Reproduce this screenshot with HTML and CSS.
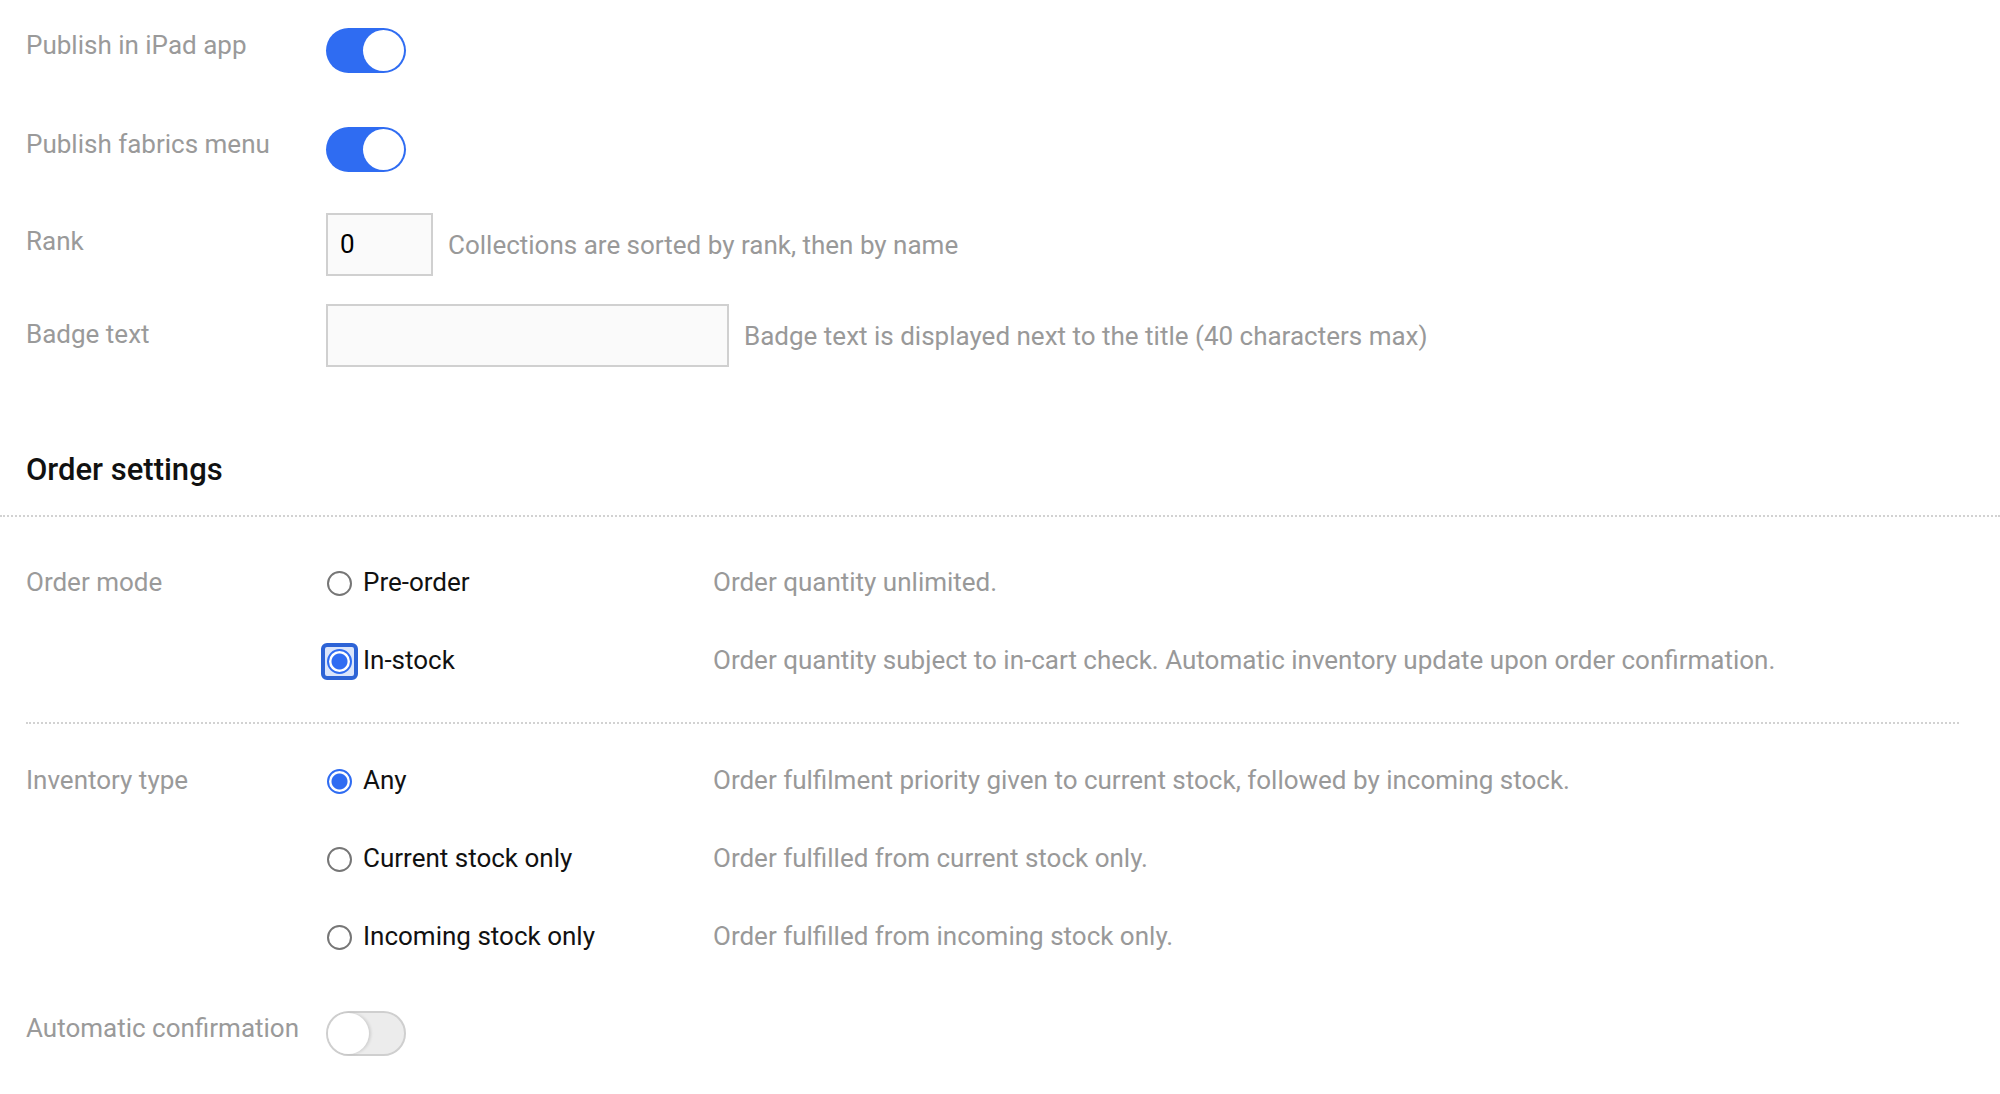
FILE: index.html
```html
<!DOCTYPE html>
<html lang="en">
<head>
<meta charset="utf-8">
<title>Collection settings</title>
<link rel="stylesheet" href="styles.css">
</head>
<body>
<div class="page">
  <section class="general">
    <div class="field field-toggle first">
      <div class="label">Publish in iPad app</div>
      <span class="toggle on"><span class="knob"></span></span>
    </div>
    <div class="field field-toggle second">
      <div class="label">Publish fabrics menu</div>
      <span class="toggle on"><span class="knob"></span></span>
    </div>
    <div class="field field-input rank">
      <div class="label">Rank</div>
      <div class="input input-rank">0</div>
      <div class="hint">Collections are sorted by rank, then by name</div>
    </div>
    <div class="field field-input badge">
      <div class="label">Badge text</div>
      <div class="input input-badge"></div>
      <div class="hint">Badge text is displayed next to the title (40 characters max)</div>
    </div>
  </section>

  <h2 class="section-title">Order settings</h2>
  <hr class="rule rule-full">

  <section class="order">
    <div class="field field-radios mode">
      <div class="label">Order mode</div>
      <div class="options">
        <div class="option">
          <span class="choice"><span class="radio"></span><span class="choice-text">Pre-order</span></span>
          <span class="hint">Order quantity unlimited.</span>
        </div>
        <div class="option">
          <span class="choice"><span class="focus-ring"><span class="radio checked"></span></span><span class="choice-text">In-stock</span></span>
          <span class="hint">Order quantity subject to in-cart check. Automatic inventory update upon order confirmation.</span>
        </div>
      </div>
    </div>

    <hr class="rule rule-inner">

    <div class="field field-radios inventory">
      <div class="label">Inventory type</div>
      <div class="options">
        <div class="option">
          <span class="choice"><span class="radio checked"></span><span class="choice-text">Any</span></span>
          <span class="hint">Order fulfilment priority given to current stock, followed by incoming stock.</span>
        </div>
        <div class="option">
          <span class="choice"><span class="radio"></span><span class="choice-text">Current stock only</span></span>
          <span class="hint">Order fulfilled from current stock only.</span>
        </div>
        <div class="option">
          <span class="choice"><span class="radio"></span><span class="choice-text">Incoming stock only</span></span>
          <span class="hint">Order fulfilled from incoming stock only.</span>
        </div>
      </div>
    </div>

    <div class="field field-toggle auto">
      <div class="label">Automatic confirmation</div>
      <span class="toggle off"><span class="knob"></span></span>
    </div>
  </section>
</div>
</body>
</html>
```
FILE: styles.css
```css
html, body {
  margin: 0;
  padding: 0;
  background: #ffffff;
}

body {
  font-family: Roboto, "Liberation Sans", Arial, sans-serif;
  font-size: 26px;
  color: #999999;
}

.page {
  width: 2000px;
}

.general,
.order {
  padding: 0 41px 0 26px;
}

.field {
  display: flex;
  align-items: flex-start;
}

.label {
  width: 300px;
  flex: none;
  line-height: 30px;
  color: #9a9a9a;
}

/* toggles */
.field-toggle .label {
  padding-top: 2px;
}

.first { margin-top: 28px; }
.second { margin-top: 54px; }

.toggle {
  flex: none;
  display: flex;
  width: 80px;
  height: 45px;
  box-sizing: border-box;
  border-radius: 23px;
}

.toggle.on {
  background: #2f6cf2;
  justify-content: flex-end;
  padding: 2px;
}

.toggle.on .knob {
  width: 41px;
  height: 41px;
  border-radius: 50%;
  background: #ffffff;
}

.toggle.off {
  background: #ececec;
  border: 2px solid #cfcfcf;
  justify-content: flex-start;
  padding: 0;
}

.toggle.off .knob {
  width: 41px;
  height: 41px;
  border-radius: 50%;
  background: #ffffff;
  box-shadow: 2px 0 3px rgba(0, 0, 0, 0.12);
}

/* inputs */
.rank { margin-top: 41px; }
.badge { margin-top: 28px; }

.field-input { align-items: center; }
.field-input .label { align-self: flex-start; }
.rank .label { padding-top: 13px; }
.badge .label { padding-top: 15px; }

.input {
  flex: none;
  box-sizing: border-box;
  height: 63px;
  border: 2px solid #d0d0d0;
  background: #fafafa;
  color: #000000;
  line-height: 59px;
  padding-left: 12px;
}

.input-rank { width: 107px; }
.input-badge { width: 403px; }

.hint {
  color: #999999;
  line-height: 30px;
  margin-left: 15px;
  white-space: nowrap;
}

/* section heading */
.section-title {
  margin: 83px 0 0 0;
  padding-left: 26px;
  font-size: 31px;
  font-weight: 500;
  line-height: 40px;
  color: #111111;
}

.rule {
  border: 0;
  border-top: 2px dotted #d2d2d2;
  height: 0;
  margin: 0;
}

.rule-full {
  margin-top: 25px;
}

.rule-inner {
  margin-top: 47px;
}

/* radios */
.mode { margin-top: 50px; }
.inventory { margin-top: 41px; }
.auto { margin-top: 60px; }

.options {
  display: flex;
  flex-direction: column;
  gap: 48px;
}

.option {
  display: flex;
  align-items: center;
  height: 30px;
}

.choice {
  width: 387px;
  flex: none;
  display: flex;
  align-items: center;
}

.choice-text {
  color: #111111;
  line-height: 30px;
}

.option .hint {
  margin-left: 0;
}

.radio {
  flex: none;
  width: 25px;
  height: 25px;
  box-sizing: border-box;
  border: 2px solid #767676;
  border-radius: 50%;
  background: #ffffff;
  margin: 2px 11px 0 1px;
}

.radio.checked {
  border-color: #2f6cf2;
  background: radial-gradient(circle, #2f6cf2 0, #2f6cf2 7.5px, #ffffff 8.5px);
}

.focus-ring {
  flex: none;
  display: flex;
  align-items: center;
  justify-content: center;
  width: 37px;
  height: 37px;
  box-sizing: border-box;
  border: 4px solid #2d63d6;
  border-radius: 6px;
  background: #dbe5fb;
  margin: 2px 5px 0 -5px;
}

.focus-ring .radio {
  margin: 0;
}
```
